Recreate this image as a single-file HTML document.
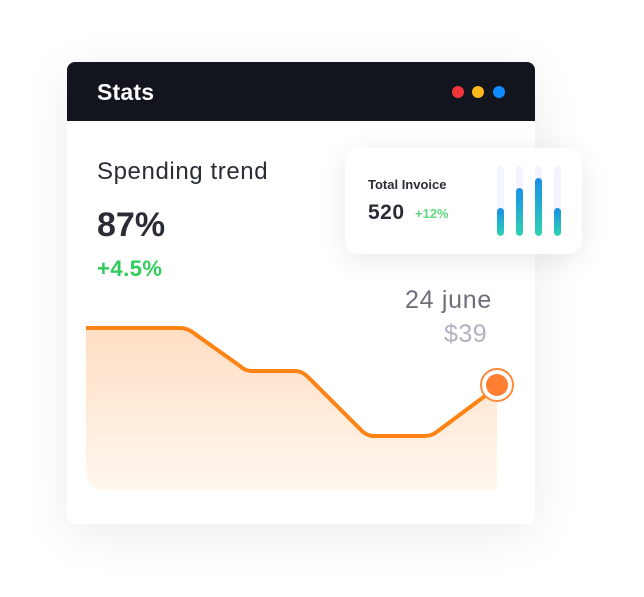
<!DOCTYPE html>
<html><head><style>
body{margin:0;width:644px;height:597px;background:#fff;font-family:"Liberation Sans",sans-serif;position:relative;overflow:hidden}
.card{position:absolute;left:67px;top:62px;width:468px;height:462px;background:#fff;border-radius:8px;box-shadow:0 10px 50px rgba(0,0,0,.08);overflow:hidden}
.hd{height:59px;background:#12151e;position:relative}
.hd span{position:absolute;left:30px;top:17px;color:#fff;font-size:23px;font-weight:bold;letter-spacing:.2px}
.dot{position:absolute;top:24px;width:12px;height:12px;border-radius:50%}
.t{position:absolute;white-space:nowrap}
.inv{position:absolute;left:345px;top:148px;width:237px;height:106px;background:#fff;border-radius:14px;box-shadow:0 6px 30px rgba(0,0,0,.09)}
.bar{position:absolute;top:18px;width:7px;height:70px;border-radius:4px;background:#f3f4fd;overflow:hidden}
.bar i{position:absolute;left:0;bottom:0;width:7px;border-radius:4px;background:linear-gradient(#1a8fe8,#2fd3b0)}
</style></head><body>
<div class="card">
<div class="hd"><span>Stats</span>
<div class="dot" style="left:385px;background:#f0383b"></div>
<div class="dot" style="left:405px;background:#fbb91b"></div>
<div class="dot" style="left:426px;background:#0f8cff"></div></div>
</div>
<div class="t" style="left:97px;top:158px;font-size:24px;letter-spacing:.6px;color:#2a2d36">Spending trend</div>
<div class="t" style="left:97px;top:206px;font-size:34px;font-weight:bold;color:#2a2d36">87%</div>
<div class="t" style="left:97px;top:256px;font-size:22px;font-weight:bold;letter-spacing:.5px;color:#2ecc5a">+4.5%</div>
<div class="t" style="left:405px;top:286px;font-size:25px;letter-spacing:.7px;color:#6d707a">24 june</div>
<div class="t" style="left:444px;top:320px;font-size:25px;letter-spacing:.5px;color:#b0b2c0">$39</div>
<svg style="position:absolute;left:0;top:0" width="644" height="597">
<defs><linearGradient id="g" x1="0" y1="0" x2="0" y2="1"><stop offset="0" stop-color="#ffd6b5"/><stop offset="1" stop-color="#fff5ec"/></linearGradient></defs>
<path d="M86 330 L180 330 Q188 330 195 336 L240 368 Q245 372 252 372 L295 372 Q302 372 308 378 L360 430 Q366 437 374 437 L425 437 Q432 437 438 432 L497 388 L497 490 L106 490 Q86 490 86 470 Z" fill="url(#g)" opacity=".8"/>
<path d="M86 328 L180 328 Q188 328 195 334 L240 366 Q245 371 252 371 L295 371 Q302 371 308 377 L360 429 Q366 436 374 436 L425 436 Q432 436 438 431 L497 387" fill="none" stroke="#fe8315" stroke-width="4"/>
<circle cx="497" cy="385" r="16" fill="#fff" stroke="#fe8a3a" stroke-width="2"/>
<circle cx="497" cy="385" r="11" fill="#fe7e32"/>
</svg>
<div class="inv">
<div class="t" style="left:23px;top:29px;font-size:13px;font-weight:bold;color:#2a2d36">Total Invoice</div>
<div class="t" style="left:23px;top:53px;font-size:21px;font-weight:bold;letter-spacing:.5px;color:#2a2d36">520</div>
<div class="t" style="left:70px;top:58px;font-size:13px;font-weight:bold;color:#5fd87e">+12%</div>
<div class="bar" style="left:152px"><i style="height:28px"></i></div>
<div class="bar" style="left:171px"><i style="height:48px"></i></div>
<div class="bar" style="left:190px"><i style="height:58px"></i></div>
<div class="bar" style="left:209px"><i style="height:28px"></i></div>
</div>
</body></html>
